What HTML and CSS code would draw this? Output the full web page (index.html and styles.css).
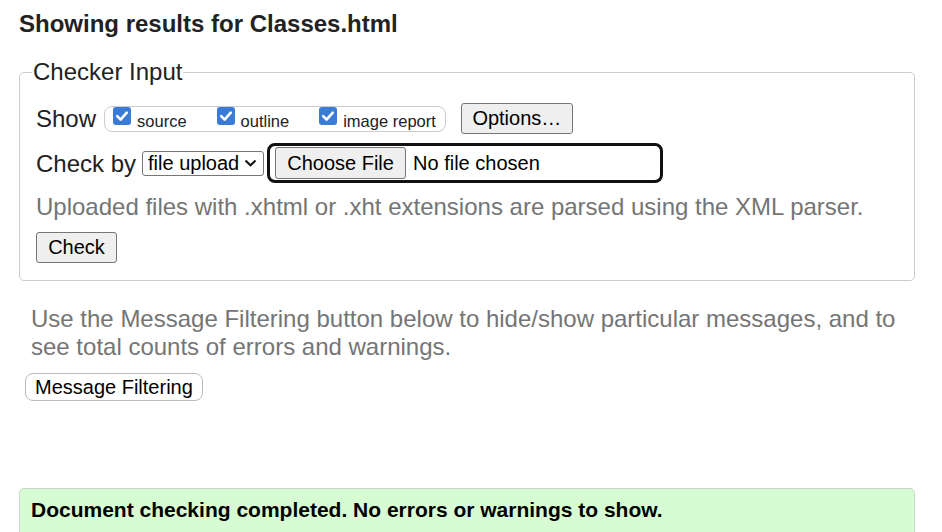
FILE: index.html
```html
<!DOCTYPE html>
<html>
<head>
<meta charset="utf-8">
<link rel="stylesheet" href="styles.css">
</head>
<body>
<h2 class="title">Showing results for Classes.html</h2>
<fieldset class="checker">
  <legend class="legend">Checker Input</legend>
  <div class="row row-show">
    <span class="lbl">Show</span>
    <span class="pill">
      <span class="opt"><span class="cb"><svg viewBox="0 0 18 18" width="18" height="18"><path d="M4.2 9.2 L7.6 12.6 L13.8 5.6" fill="none" stroke="#fff" stroke-width="2.6" stroke-linecap="round" stroke-linejoin="round"/></svg></span><span class="optlbl">source</span></span>
      <span class="opt"><span class="cb"><svg viewBox="0 0 18 18" width="18" height="18"><path d="M4.2 9.2 L7.6 12.6 L13.8 5.6" fill="none" stroke="#fff" stroke-width="2.6" stroke-linecap="round" stroke-linejoin="round"/></svg></span><span class="optlbl">outline</span></span>
      <span class="opt"><span class="cb"><svg viewBox="0 0 18 18" width="18" height="18"><path d="M4.2 9.2 L7.6 12.6 L13.8 5.6" fill="none" stroke="#fff" stroke-width="2.6" stroke-linecap="round" stroke-linejoin="round"/></svg></span><span class="optlbl">image report</span></span>
    </span>
    <span class="btn btn-options">Options…</span>
  </div>
  <div class="row row-check">
    <span class="lbl">Check by</span>
    <span class="select">file upload<svg class="chev" viewBox="0 0 13 8" width="13" height="8"><path d="M1.5 1.5 L6.5 6.3 L11.5 1.5" fill="none" stroke="#111" stroke-width="2"/></svg></span>
    <span class="file"><span class="btn btn-choose">Choose File</span><span class="nofile">No file chosen</span></span>
  </div>
  <p class="hint">Uploaded files with .xhtml or .xht extensions are parsed using the XML parser.</p>
  <span class="btn btn-check">Check</span>
</fieldset>
<p class="info">Use the Message Filtering button below to hide/show particular messages, and to see total counts of errors and warnings.</p>
<span class="btn-filter">Message Filtering</span>
<div class="success">Document checking completed. No errors or warnings to show.</div>
</body>
</html>
```
FILE: styles.css
```css
html, body { margin: 0; padding: 0; background: #fff; }
body {
  font-family: "Liberation Sans", Arial, sans-serif;
  color: #222;
  padding: 0 27px 0 19px;
}
.title {
  font-size: 24px;
  font-weight: bold;
  margin: 0;
  padding-top: 10px;
  line-height: 28px;
  color: #222;
}
.checker {
  margin: 20px 0 0 0;
  border: 1px solid #ccc;
  border-radius: 5px;
  padding: 0 16px 17px 16px;
}
.legend {
  font-size: 24px;
  padding: 0 1px;
  margin-left: -4px;
  line-height: 28px;
}
.row { display: flex; align-items: center; }
.lbl { font-size: 24px; line-height: 28px; }
.row-show { height: 31px; margin-top: 17px; }
.pill {
  display: flex;
  align-items: flex-start;
  margin-left: 8px;
  height: 26px;
  box-sizing: border-box;
  border: 1px solid #ccc;
  border-radius: 8px;
  padding: 0 9px 0 8px;
}
.opt { display: flex; align-items: flex-start; margin-right: 30px; }
.opt:last-child { margin-right: 0; }
.cb {
  width: 18px; height: 18px;
  background: #3a7bd5;
  border-radius: 3px;
  display: block;
}
.cb svg { display: block; }
.optlbl { font-size: 16.5px; margin-left: 6px; margin-top: 5px; line-height: 18px; }
.btn {
  display: inline-flex;
  align-items: center;
  justify-content: center;
  background: #efefef;
  border: 1px solid #767676;
  border-radius: 3px;
  box-sizing: border-box;
  color: #000;
  font-size: 20px;
}
.btn-options { margin-left: 15px; width: 112px; height: 31px; }
.row-check { margin-top: 9px; height: 40px; }
.row-check .lbl { padding-top: 2px; }
.select {
  margin-left: 6px;
  display: inline-flex;
  align-items: center;
  width: 122px; height: 25px;
  box-sizing: border-box;
  border: 1px solid #767676;
  border-radius: 3px;
  font-size: 20px;
  color: #000;
  padding-left: 5px;
}
.chev { margin-left: 5px; }
.file {
  margin-left: 3px;
  display: flex;
  align-items: center;
  width: 396px; height: 40px;
  box-sizing: border-box;
  border: 3px solid #111;
  border-radius: 8px;
  padding-left: 5px;
}
.btn-choose { width: 131px; height: 32px; }
.nofile { font-size: 20px; color: #000; margin-left: 7px; }
.hint {
  font-size: 24px;
  color: #757575;
  margin: 10px 0 0 0;
  line-height: 28px;
}
.btn-check { width: 81px; height: 31px; margin-top: 11px; }
.info {
  font-size: 24px;
  color: #757575;
  margin: 24px 0 0 12px;
  line-height: 28px;
}
.btn-filter {
  display: inline-flex;
  align-items: center;
  margin: 12px 0 0 6px;
  height: 28px;
  box-sizing: border-box;
  border: 1px solid #bbb;
  border-radius: 8px;
  padding: 0 9px 0 9px;
  font-size: 20px;
  color: #000;
  background: #fff;
}
.success {
  margin-top: 87px;
  height: 60px;
  box-sizing: border-box;
  background: #d7fcd3;
  border: 1px solid #c8d8c6;
  border-radius: 5px;
  padding: 9px 11px;
  font-weight: bold;
  font-size: 21px;
  line-height: 24px;
  color: #000;
}
```
